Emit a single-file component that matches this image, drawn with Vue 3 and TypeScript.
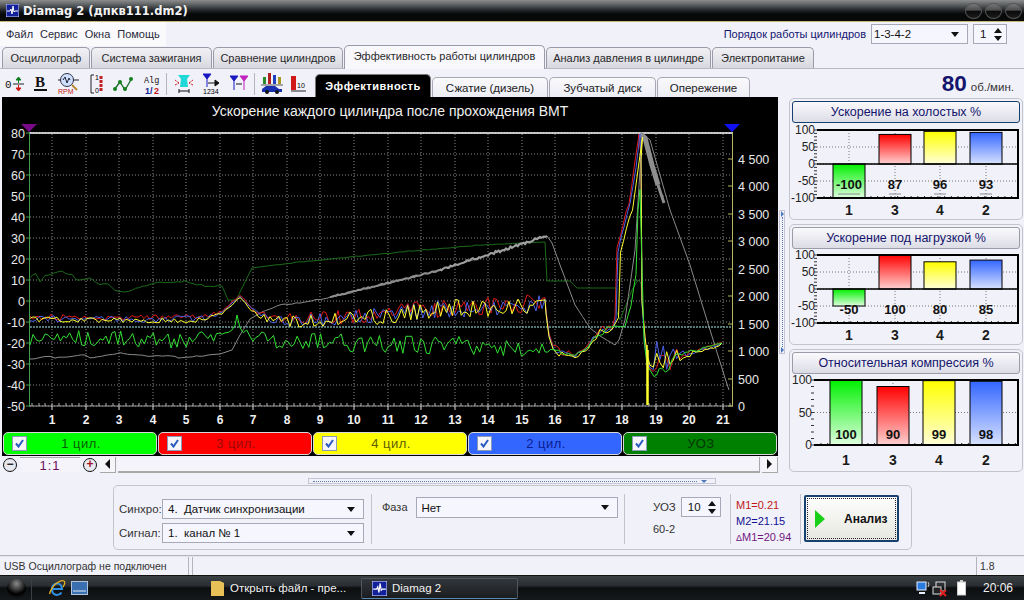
<template>
  <div class="app">
    <header class="titlebar">
      <svg class="app-icon" width="13" height="13" viewBox="0 0 13 13">
        <rect width="13" height="13" fill="#12209a" stroke="#cdd6ff" />
        <path d="M1 7h3l1-2 1 5 1-8 1 6 1-1h3" fill="none" stroke="#fff" />
      </svg>
      <span class="title-text">Diamag 2 (дпкв111.dm2)</span>
      <div class="win-buttons">
        <i v-for="n in 3" :key="n"></i>
      </div>
    </header>

    <div class="menurow">
      <nav class="menu">
        <span v-for="m in menu" :key="m">{{ m }}</span>
      </nav>
      <div class="order">
        <span class="order-label">Порядок работы цилиндров</span>
        <div class="combo order-combo"><span>1-3-4-2</span><b class="caret"></b></div>
        <div class="spin order-spin"><span>1</span><em><b class="up"></b><b class="down"></b></em></div>
      </div>
    </div>

    <div class="tabs">
      <div v-for="t in tabs" :key="t.name" class="tab" :class="{ active: t.active }" :style="{ width: t.w + 'px' }">{{ t.name }}</div>
    </div>

    <div class="toolbar">
      <div class="tools">
        <svg class="tool" width="20" height="24" viewBox="0 0 20 24">
          <text x="0" y="16" class="ic">0</text>
          <path d="M8 12h11" stroke="#222" />
          <path d="M13.500 11V7M11 8l2.500-3 2.500 3z" stroke="#0a7a1e" fill="#0a7a1e" />
          <path d="M13.500 13v4M11 16l2.500 3 2.500-3z" stroke="#d01818" fill="#d01818" />
        </svg>
        <svg class="tool" width="14" height="24" viewBox="0 0 14 24" style="margin-left:9px">
          <text x="1" y="15" class="ic-b">B</text>
          <rect x="0" y="17" width="13" height="2" fill="#111" />
        </svg>
        <svg class="tool" width="22" height="24" viewBox="0 0 22 24" style="margin-left:10px">
          <circle cx="9" cy="8" r="6.500" fill="#cfe0ff" stroke="#334" />
          <path d="M5 8l2-3 2 6 2-5 1 2" fill="none" stroke="#223" />
          <path d="M0 8h3M15 8h6" stroke="#223" />
          <path d="M14 13l5 5" stroke="#b98a30" stroke-width="2" />
          <text x="0" y="22" class="ic-s" fill="#c01818">RPM</text>
        </svg>
        <svg class="tool" width="15" height="24" viewBox="0 0 15 24" style="margin-left:10px">
          <path d="M4 3H1v18h3" fill="none" stroke="#222" />
          <text x="5" y="8" class="ic-s">1</text>
          <text x="5" y="21" class="ic-s">0</text>
          <path d="M11 4v15" stroke="#c02020" stroke-width="3" stroke-dasharray="3 1" />
        </svg>
        <svg class="tool" width="21" height="24" viewBox="0 0 21 24" style="margin-left:8px">
          <path d="M1 18l6-8 5 8 7-12" fill="none" stroke="#1a6a2a" stroke-width="1.300" />
          <circle cx="2" cy="17" r="2" fill="#148020" />
          <circle cx="7" cy="10" r="2" fill="#148020" />
          <circle cx="12" cy="17" r="2" fill="#148020" />
          <circle cx="18" cy="7" r="2" fill="#148020" />
        </svg>
        <svg class="tool" width="16" height="24" viewBox="0 0 16 24" style="margin-left:10px">
          <text x="0" y="11" class="ic-alg">Alg</text>
          <text x="1" y="22" class="ic-m" fill="#102090">1/</text>
          <text x="10" y="22" class="ic-m" fill="#c01818">2</text>
        </svg>
        <i class="sep"></i>
        <svg class="tool" width="18" height="24" viewBox="0 0 18 24" style="margin-left:8px">
          <path d="M3 3h12l-3 4 1 8H5l1-8z" fill="#20d8d8" />
          <path d="M0 8l4 3M18 8l-4 3M0 13l4-2M18 13l-4-2" stroke="#d02020" stroke-dasharray="2 1" />
          <path d="M4 19h10M4 17v4M14 17v4" stroke="#111" />
        </svg>
        <svg class="tool" width="17" height="24" viewBox="0 0 17 24" style="margin-left:10px">
          <path d="M0 2h8L4 7zM4 7v8" fill="#1818c0" stroke="#1818c0" />
          <path d="M5 11h10M12 8l4 3-4 3z" stroke="#111" fill="#111" />
          <text x="0" y="22" class="ic-s">1234</text>
        </svg>
        <svg class="tool" width="18" height="24" viewBox="0 0 18 24" style="margin-left:10px">
          <path d="M0 4h8L4 9zM4 9v9" fill="#1818c0" stroke="#1818c0" />
          <path d="M10 4h8l-4 5zM14 9v9" fill="#c020c0" stroke="#c020c0" />
          <path d="M6 12h6" stroke="#111" />
        </svg>
        <i class="sep sep-b"></i>
        <svg class="tool" width="22" height="24" viewBox="0 0 22 24" style="margin-left:6px">
          <rect x="2" y="5" width="3" height="7" fill="#2a8a2a" />
          <rect x="7" y="1" width="3" height="11" fill="#b02020" />
          <rect x="12" y="3" width="3" height="9" fill="#2040c0" />
          <rect x="17" y="5" width="3" height="7" fill="#a89a20" />
          <path d="M0 13h22" stroke="#555" />
          <path d="M1 20v-3l4-3h9l4 3h3v3z" fill="#1830b0" />
          <circle cx="6" cy="20" r="2" fill="#111" />
          <circle cx="16" cy="20" r="2" fill="#111" />
        </svg>
        <svg class="tool" width="15" height="24" viewBox="0 0 15 24" style="margin-left:8px">
          <rect x="0" y="4" width="5" height="14" fill="#d01818" />
          <text x="6" y="16" class="ic-s" font-weight="700">10</text>
          <path d="M0 19h15" stroke="#222" />
        </svg>
      </div>
      <div class="subtabs">
        <div v-for="s in subtabs" :key="s.name" class="subtab" :class="{ active: s.active }" :style="{ width: s.w + 'px' }">{{ s.name }}</div>
      </div>
      <div class="rpm"><strong>80</strong><span>об./мин.</span></div>
    </div>

    <main class="workspace">
      <section class="scope">
        <svg class="plot" width="776" height="334" viewBox="2 97 776 334">
          <rect x="2" y="97" width="776" height="334" fill="#000" />
          <text x="390" y="116" class="plot-title" text-anchor="middle">Ускорение каждого цилиндра после прохождения ВМТ</text>
          <g stroke="#8a8a8a" stroke-dasharray="1 2">
            <path v-for="t in xTicks" :key="'v' + t.n" :d="`M${t.x} 134V406`" />
            <path v-for="t in leftTicks" :key="'h' + t.v" :d="`M30 ${t.y}H733`" />
          </g>
          <path d="M30 327H733" stroke="#a8f0f0" stroke-dasharray="2 1" />
          <path d="M29 133H733" stroke="#fff" stroke-width="1.500" />
          <path d="M29.500 133V406" stroke="#3f9f4f" />
          <path d="M732.500 133V406" stroke="#b8b860" />
          <path d="M29 406H733" stroke="#9a9a9a" />
          <path v-for="x in minorX" :key="'m' + x" :d="`M${x} 406v-3`" stroke="#b0b0b0" />
          <path v-for="t in xTicks" :key="'t' + t.n" :d="`M${t.x} 406v4`" stroke="#ddd" />
          <path v-for="t in rightTicks" :key="'r' + t.v" :d="`M728 ${t.y}h5`" stroke="#b8b860" />
          <path v-for="t in leftTicks" :key="'l' + t.v" :d="`M26 ${t.y}h4`" stroke="#3f9f4f" />

          <polyline :points="series.uoz" class="line" stroke="#1b6a1b" />
          <polyline :points="series.gray" class="line" stroke="#8a8a8a" />
          <polyline :points="series.grayThin" class="line w2" stroke="#8e8e8e" />
          <polyline :points="series.grayThickA" class="line w2" stroke="#a0a0a0" />
          <polyline :points="series.grayThickB" class="line w5" stroke="#8e8e8e" />
          <polyline :points="series.grayThickC" class="line w3" stroke="#8e8e8e" />
          <polyline :points="series.red" class="line" stroke="#e01a1a" />
          <polyline :points="series.blue" class="line" stroke="#4a62e8" />
          <polyline :points="series.yellow" class="line" stroke="#ffff30" />
          <polyline :points="series.lime" class="line" stroke="#32e032" />
          <path d="M647 345V405M648 405V350" stroke="#ffff30" stroke-width="1.500" fill="none" />

          <path d="M21 124h16l-8 8z" fill="#7a0a8a" />
          <path d="M724 124h16l-8 8z" fill="#1010f0" />

          <text v-for="t in leftTicks" :key="'lt' + t.v" :x="25" :y="t.y + 4.500" class="axis-l" text-anchor="end">{{ t.v }}</text>
          <text v-for="t in rightTicks" :key="'rt' + t.v" :x="738" :y="t.y + 4.500" class="axis-r">{{ t.label }}</text>
          <text v-for="t in xTicks" :key="'xt' + t.n" :x="t.x" :y="424" class="axis-x" text-anchor="middle">{{ t.n }}</text>
        </svg>
        <div class="legend">
          <div v-for="c in legend" :key="c.name" class="leg" :style="{ background: c.bg, color: c.fg }">
            <span class="check">
              <svg width="9" height="9" viewBox="0 0 9 9"><path d="M1 4.500l2.500 3L8 1" fill="none" stroke="#2a5ac0" stroke-width="2" /></svg>
            </span>
            <span class="leg-name">{{ c.name }}</span>
          </div>
        </div>
        <div class="zoombar">
          <span class="round">&minus;</span>
          <span class="ratio">1:1</span>
          <span class="round plus">+</span>
          <span class="arrow"><b class="left"></b></span>
          <div class="track"></div>
          <span class="arrow"><b class="right"></b></span>
        </div>
      </section>

      <div class="vsplit">
        <b class="tip"></b>
        <i></i>
        <b class="tip"></b>
      </div>

      <aside class="side">
        <section v-for="p in panels" :key="p.title" class="panel" :style="{ height: p.h + 'px' }">
          <div class="panel-title" :class="{ focused: p.focused }">{{ p.title }}</div>
          <svg :width="232" :height="p.h - 27" :viewBox="`789 ${p.top + 25} 232 ${p.h - 27}`">
            <g stroke="#777" stroke-dasharray="1 2">
              <path v-for="g in p.grid" :key="'g' + g" :d="`M${p.left} ${g}H1016`" />
              <path v-for="b in p.bars" :key="'v' + b.label" :d="`M${b.x + b.w / 2} ${p.plotTop}V${p.plotBottom}`" />
            </g>
            <path v-for="g in p.minor" :key="'m' + g" :d="`M${p.left - 3} ${g}h3`" stroke="#333" />
            <path v-for="t in p.bottomTicks" :key="'b' + t" :d="`M${t} ${p.plotBottom - 2}v2`" stroke="#333" />
            <rect
              v-for="b in p.bars"
              :key="b.label"
              :x="b.x"
              :y="b.y"
              :width="b.w"
              :height="b.h"
              :fill="`url(#${b.grad})`"
              stroke="#000"
            />
            <path v-if="p.zero" :d="`M${p.left} ${p.zero}H1016`" stroke="#000" stroke-width="1.500" />
            <path :d="`M${p.left} ${p.plotTop}H1016V${p.plotBottom}H${p.left}`" fill="none" stroke="#000" stroke-width="2" />
            <template v-if="p.underline">
              <path v-for="b in p.bars" :key="'u' + b.label" :d="`M${b.x + b.w / 2 - (b.label === '1' ? 11 : 6)} ${p.plotBottom - 4}h${b.label === '1' ? 22 : 12}`" stroke="#8c8c8c" />
            </template>
            <text v-for="t in p.ticks" :key="'t' + t.v" :x="p.left - 2" :y="t.y + 4" class="bar-axis" text-anchor="end">{{ t.v }}</text>
            <text v-for="b in p.bars" :key="'val' + b.label" :x="b.x + b.w / 2" :y="p.valueY" class="bar-val" text-anchor="middle">{{ b.value }}</text>
            <text v-for="b in p.bars" :key="'lab' + b.label" :x="b.x + b.w / 2" :y="p.labelY" class="bar-label" text-anchor="middle">{{ b.label }}</text>
            <defs>
              <linearGradient id="g-green" x1="0" y1="0" x2="0" y2="1"><stop offset="0" stop-color="#00f000" /><stop offset="1" stop-color="#e0ffe0" /></linearGradient>
              <linearGradient id="g-red" x1="0" y1="0" x2="0" y2="1"><stop offset="0" stop-color="#ff0000" /><stop offset="1" stop-color="#ffd0d0" /></linearGradient>
              <linearGradient id="g-yellow" x1="0" y1="0" x2="0" y2="1"><stop offset="0" stop-color="#ffff00" /><stop offset="1" stop-color="#ffffd8" /></linearGradient>
              <linearGradient id="g-blue" x1="0" y1="0" x2="0" y2="1"><stop offset="0" stop-color="#3366ff" /><stop offset="1" stop-color="#d8e2ff" /></linearGradient>
            </defs>
          </svg>
        </section>
      </aside>
    </main>

    <div class="hsplit"><i></i><b class="tip-down"></b></div>

    <div class="controls-row">
      <section class="controls">
        <div class="ctl-group sync">
          <div class="ctl-line"><label>Синхро:</label><div class="combo"><span>4.&nbsp; Датчик синхронизации</span><b class="caret"></b></div></div>
          <div class="ctl-line"><label>Сигнал:</label><div class="combo"><span>1.&nbsp; канал № 1</span><b class="caret"></b></div></div>
        </div>
        <div class="ctl-group phase">
          <label>Фаза</label>
          <div class="combo"><span>Нет</span><b class="caret"></b></div>
        </div>
        <div class="ctl-group uoz">
          <div class="uoz-line"><label>УОЗ</label><div class="spin"><span>10</span><em><b class="up"></b><b class="down"></b></em></div></div>
          <div class="teeth">60-2</div>
        </div>
        <div class="ctl-group marks">
          <div class="m1">M1=0.21</div>
          <div class="m2">M2=21.15</div>
          <div class="m3"><small>&Delta;</small>M1=20.94</div>
        </div>
        <div class="analyze-wrap">
          <div class="analyze"><b class="play"></b><span>Анализ</span></div>
        </div>
      </section>
    </div>

    <footer class="status">
      <span class="st-main">USB Осциллограф не подключен</span>
      <span class="st-mid"></span>
      <span class="st-ver">1.8</span>
    </footer>

    <div class="taskbar">
      <div class="orb"><i></i></div>
      <svg class="ie" width="18" height="20" viewBox="0 0 18 20">
        <path d="M4.500 11h9.500c0-3.500-2.200-5.500-5-5.500S4 8 4 11.500 6.200 17 9 17c2 0 3.500-1 4.500-2.500" fill="none" stroke="#2f8ee0" stroke-width="2.200" />
        <path d="M1.500 16C4 7 12 1.500 16 3c1.500 1 .5 4-1 6" fill="none" stroke="#e8b020" stroke-width="1.300" />
      </svg>
      <svg class="desk" width="17" height="14" viewBox="0 0 17 14">
        <rect x="0.500" y="0.500" width="16" height="13" fill="#3a70b0" stroke="#b0c4dc" />
        <path d="M2 10h13" stroke="#dfe8f4" />
      </svg>
      <div class="task task-folder">
        <svg width="14" height="16" viewBox="0 0 14 16"><path d="M0 1h9l4 2v13H0z" fill="#e8c058" /></svg>
        <span>Открыть файл - пре...</span>
      </div>
      <div class="task task-active">
        <svg width="15" height="15" viewBox="0 0 13 13">
          <rect width="13" height="13" fill="#12209a" stroke="#cdd6ff" />
          <path d="M1 7h3l1-2 1 5 1-8 1 6 1-1h3" fill="none" stroke="#fff" />
        </svg>
        <span>Diamag 2</span>
      </div>
      <div class="tray">
        <svg width="34" height="17" viewBox="0 0 34 17">
          <rect x="1" y="2" width="9" height="8" fill="#2a7ae0" stroke="#e8f0ff" />
          <path d="M3 13h6" stroke="#e8f0ff" stroke-width="2" />
          <path d="M12 2q2 2 0 5" fill="none" stroke="#ccc" />
          <rect x="20" y="2" width="9" height="9" fill="none" stroke="#ddd" />
          <rect x="17" y="7" width="8" height="7" fill="#222" stroke="#ddd" />
          <path d="M24 10l6 6m0-6l-6 6" stroke="#e02020" stroke-width="2" />
        </svg>
        <svg width="9" height="16" viewBox="0 0 9 16" class="batt">
          <rect x="0.500" y="2" width="8" height="13" fill="#fff" stroke="#ccc" />
          <rect x="3" y="0" width="3" height="2" fill="#ccc" />
        </svg>
        <span class="clock">20:06</span>
      </div>
    </div>
  </div>
</template>

<script setup lang="ts">
type Pt = [number, number, number?]

const menu = ['Файл', 'Сервис', 'Окна', 'Помощь']

const tabs = [
  { name: 'Осциллограф', w: 88 },
  { name: 'Система зажигания', w: 121 },
  { name: 'Сравнение цилиндров', w: 130 },
  { name: 'Эффективность работы цилиндров', w: 201, active: true },
  { name: 'Анализ давления в цилиндре', w: 165 },
  { name: 'Электропитание', w: 102 }
]

const subtabs = [
  { name: 'Эффективность', w: 116, active: true },
  { name: 'Сжатие (дизель)', w: 116 },
  { name: 'Зубчатый диск', w: 107 },
  { name: 'Опережение', w: 93 }
]

const legend = [
  { name: '1 цил.', bg: '#00ff00', fg: '#056005' },
  { name: '3 цил.', bg: '#ff0000', fg: '#9a0a0a' },
  { name: '4 цил.', bg: '#ffff00', fg: '#5c5c00' },
  { name: '2 цил.', bg: '#3366ff', fg: '#0a2090' },
  { name: 'УОЗ', bg: '#008000', fg: '#033803' }
]

// chart scales, in page pixels
const xTicks = Array.from({ length: 21 }, (_, i) => ({ n: i + 1, x: Math.round(52 + i * 33.55) }))
const minorX = Array.from({ length: 105 }, (_, i) => Math.round(32 + i * 6.71))
const leftTicks = Array.from({ length: 14 }, (_, i) => ({ v: 80 - i * 10, y: 133 + i * 21 }))
const rightTicks = Array.from({ length: 10 }, (_, i) => {
  const v = (i + 1) * 500
  return { v, y: Math.round(406 - (v * 247) / 4500), label: v >= 1000 ? `${Math.floor(v / 1000)} ${String(v % 1000).padStart(3, '0')}` : String(v) }
}).concat([{ v: 0, y: 406, label: '0' }])
  .filter((t) => t.v <= 4500)

function rng(seed: number) {
  let s = seed * 7919 + 17
  return () => {
    s = (s * 16807) % 2147483647
    return s / 2147483647 - 0.5
  }
}

// interpolate between key points and add noise; shift moves the rising edge near 18 sideways
function trace(points: Pt[], seed: number, step = 3, dy = 0, shift = 0) {
  const rand = rng(seed)
  rand()
  rand()
  const out: string[] = []
  for (let i = 0; i < points.length - 1; i++) {
    const [x0, y0, a0 = 0] = points[i]
    const [x1, y1, a1 = 0] = points[i + 1]
    const n = Math.max(1, Math.round((x1 - x0) / step))
    for (let k = 0; k < n; k++) {
      const t = k / n
      const x = x0 + (x1 - x0) * t
      const y = y0 + (y1 - y0) * t + (a0 + (a1 - a0) * t) * rand() * 2 + dy
      const sx = x > 612 && x < 641 ? x + shift : x
      out.push(`${sx.toFixed(1)},${Math.min(405, y).toFixed(1)}`)
    }
  }
  const last = points[points.length - 1]
  out.push(`${last[0]},${last[1]}`)
  return out.join(' ')
}

const cylBase: Pt[] = [
  [30, 318, 3], [150, 319, 3], [205, 318, 3], [222, 312, 1], [232, 303, 0.8], [240, 296, 0.5], [248, 305, 1],
  [258, 314, 3], [270, 318, 4], [290, 320, 6], [320, 319, 7], [350, 317, 8], [380, 315, 8], [420, 311, 9],
  [470, 306, 10], [545, 304, 9], [546, 312, 3], [549, 335, 3], [553, 348, 4], [562, 353, 3], [575, 355, 2],
  [585, 350, 2.5], [590, 342, 3], [596, 335, 3], [600, 330, 3], [612, 328, 3], [616, 318, 2], [618, 250, 2],
  [624, 225, 3], [630, 205, 4], [636, 165, 4], [640, 135, 2], [641, 160, 2], [642, 300, 3], [645, 345, 10],
  [650, 360, 22], [660, 358, 18], [670, 360, 12], [680, 356, 7], [690, 353, 3], [705, 349, 1.5], [722, 343, 0.5]
]

const limeBase: Pt[] = [
  [30, 340, 8], [100, 338, 8], [180, 341, 8], [205, 338, 7], [225, 336, 4], [235, 325, 1], [237, 315, 0], [240, 325, 4],
  [250, 340, 8], [300, 340, 9], [350, 343, 9], [400, 345, 9], [450, 345, 9], [545, 350, 9], [553, 350, 4], [562, 353, 2],
  [575, 355, 1], [585, 350, 1], [595, 338, 2], [603, 332, 3], [612, 327, 3], [625, 325, 2], [631, 305, 1], [636, 275, 1],
  [638, 210, 1], [640, 190, 1], [641, 230, 1], [644, 340, 1], [647, 365, 5], [654, 375, 8], [662, 368, 8], [672, 360, 7],
  [682, 355, 3], [700, 349, 1], [722, 343, 0.5]
]

const uozBase: Pt[] = [
  [30, 277, 1], [36, 273, 1], [40, 282, 0], [45, 275, 1], [62, 272, 1], [72, 275, 1], [78, 280, 1], [90, 278, 1],
  [100, 284, 1], [108, 284, 0], [115, 291, 1], [125, 292, 0], [132, 290, 1], [150, 284, 1], [185, 281, 1], [205, 286, 1],
  [222, 286, 1], [228, 300, 0], [236, 300, 0], [252, 268, 0], [300, 262, 0.5], [400, 252, 0.5], [480, 245, 0.5], [545, 242, 0],
  [546, 262, 0], [547, 281, 0], [570, 281, 0], [577, 288, 0], [616, 288, 0], [616, 310, 0], [620, 320, 0], [632, 290, 0],
  [638, 280, 0], [641, 283, 0], [642, 300, 0]
]

const grayBase: Pt[] = [
  [30, 359, 0.5], [50, 356, 0.5], [55, 358, 0.5], [85, 355, 0.5], [90, 358, 0.5], [120, 353, 0.5], [150, 356, 0.5], [175, 356, 0.5],
  [178, 358, 0], [200, 356, 0.5], [220, 354, 0], [232, 350, 0], [240, 335, 0], [250, 319, 0], [262, 312, 0], [280, 305, 0.5],
  [300, 303, 0.5], [340, 295, 1], [400, 280, 1], [440, 270, 1], [547, 236, 0], [552, 243, 0], [560, 265, 0], [575, 305, 0],
  [590, 328, 0], [600, 336, 0], [615, 345, 0], [619, 340, 0], [625, 320, 0], [635, 250, 0], [640, 170, 0], [642, 133, 0],
  [650, 140, 0], [670, 210, 0], [690, 265, 0], [710, 330, 0], [725, 378, 0], [729, 390, 0]
]

const series = {
  uoz: trace(uozBase, 11, 4),
  gray: trace(grayBase, 23, 4),
  grayThin: trace([[330, 297, 0.6], [400, 280, 0.8], [440, 270, 0.8]], 37, 2),
  grayThickA: trace([[440, 270, 1.2], [500, 251, 1.6], [540, 238, 1.4], [547, 236, 0.5]], 41, 1.5),
  grayThickB: '640,134 645,138 652,165 658,185',
  grayThickC: '658,185 664,203',
  red: trace(cylBase, 101, 3, -1, -1),
  blue: trace(cylBase, 202, 3, 0.5, 0),
  yellow: trace(cylBase, 303, 3, 1.5, 2.5),
  lime: trace(limeBase, 404, 3)
}

interface Bar {
  label: string
  value: number
  grad: string
  x: number
  w: number
}

function makePanel(o: {
  title: string
  focused?: boolean
  top: number
  h: number
  left: number
  plotTop: number
  plotBottom: number
  min: number
  max: number
  ticks: number[]
  valueY: number
  labelY: number
  underline?: boolean
  bars: Bar[]
}) {
  const span = o.plotBottom - o.plotTop
  const toY = (v: number) => o.plotTop + ((o.max - v) * span) / (o.max - o.min)
  const zeroY = toY(0)
  const minorCount = (o.max - o.min) / 10
  return {
    ...o,
    grid: o.ticks.filter((t) => t !== o.max && t !== o.min).map(toY),
    zero: o.min < 0 ? zeroY : 0,
    ticks: o.ticks.map((v) => ({ v, y: toY(v) })),
    minor: Array.from({ length: minorCount + 1 }, (_, i) => o.plotTop + (i * span) / minorCount),
    bottomTicks: Array.from({ length: 30 }, (_, i) => o.left + 7 + i * 6.7),
    bars: o.bars.map((b) => {
      const y = toY(b.value)
      return { ...b, y: Math.min(y, zeroY), h: Math.abs(y - zeroY) }
    })
  }
}

const accelX = [831, 877, 922, 968]
const compX = [828, 875, 921, 968]
const names = ['1', '3', '4', '2']
const grads = ['g-green', 'g-red', 'g-yellow', 'g-blue']
const toBars = (values: number[], xs: number[]): Bar[] =>
  values.map((value, i) => ({ label: names[i], value, grad: grads[i], x: xs[i], w: 32 }))

const panels = [
  makePanel({
    title: 'Ускорение на холостых %',
    focused: true,
    top: 98,
    h: 122,
    left: 815,
    plotTop: 130,
    plotBottom: 198,
    min: -100,
    max: 100,
    ticks: [100, 50, 0, -50, -100],
    valueY: 189,
    labelY: 215,
    underline: true,
    bars: toBars([-100, 87, 96, 93], accelX)
  }),
  makePanel({
    title: 'Ускорение под нагрузкой %',
    top: 224,
    h: 121,
    left: 815,
    plotTop: 255,
    plotBottom: 323,
    min: -100,
    max: 100,
    ticks: [100, 50, 0, -50, -100],
    valueY: 314,
    labelY: 340,
    bars: toBars([-50, 100, 80, 85], accelX)
  }),
  makePanel({
    title: 'Относительная компрессия %',
    top: 349,
    h: 123,
    left: 812,
    plotTop: 380,
    plotBottom: 445,
    min: 0,
    max: 100,
    ticks: [100, 50, 0],
    valueY: 439,
    labelY: 465,
    bars: toBars([100, 90, 99, 98], compX)
  })
]
</script>

<style>
html,
body {
  margin: 0;
  background: #f1f1f9;
}
</style>

<style scoped>
.app {
  width: 1024px;
  height: 600px;
  overflow: hidden;
  display: flex;
  flex-direction: column;
  background: #f1f1f9;
  font-family: "Liberation Sans", Arial, sans-serif;
  font-size: 11.500px;
  color: #222;
}

.titlebar {
  height: 22px;
  flex: none;
  box-sizing: border-box;
  display: flex;
  align-items: center;
  padding: 0 2px 0 6px;
  background: linear-gradient(#8c8c8c 0, #5a5e60 5px, #24282a 10px, #060809 14px, #0a0a0a 20px);
  border-bottom: 1px solid #c8b878;
}
.title-text {
  margin-left: 4px;
  font-family: "DejaVu Sans", sans-serif;
  font-weight: 700;
  font-size: 11.500px;
  color: #f2f2f2;
}
.win-buttons {
  margin-left: auto;
  display: flex;
  gap: 3px;
}
.win-buttons i {
  box-sizing: border-box;
  width: 17px;
  height: 16px;
  border-radius: 50%;
  border: 1px solid #555;
  background: linear-gradient(#77797a 0, #4a4c4d 45%, #0a0a0a 50%, #1c1c1c 100%);
}

.menurow {
  height: 24px;
  flex: none;
  display: flex;
  justify-content: space-between;
}
.menu {
  width: 160px;
  padding-left: 6px;
  display: flex;
  align-items: center;
  gap: 7px;
  background: #fafafd;
  font-size: 11px;
  color: #2a2a3a;
}
.order {
  display: flex;
  align-items: center;
  padding-right: 17px;
}
.order-label {
  color: #141470;
  margin-right: 5px;
  font-size: 11px;
}
.order-combo {
  width: 97px;
  height: 20px;
}
.order-spin {
  width: 34px;
  height: 20px;
  margin-left: 5px;
}

.combo,
.spin {
  box-sizing: border-box;
  display: flex;
  align-items: center;
  justify-content: space-between;
  border: 1px solid #a8a8b8;
  background: #f6f6fe;
  padding: 0 8px 0 2px;
  color: #111;
}
.caret {
  width: 0;
  height: 0;
  border-left: 4px solid transparent;
  border-right: 4px solid transparent;
  border-top: 5px solid #111;
}
.spin {
  padding: 0 4px 0 6px;
}
.spin em {
  display: flex;
  flex-direction: column;
  gap: 3px;
}
.up,
.down {
  display: block;
  width: 0;
  height: 0;
  border-left: 4px solid transparent;
  border-right: 4px solid transparent;
}
.up {
  border-bottom: 5px solid #111;
}
.down {
  border-top: 5px solid #111;
}

.tabs {
  height: 23px;
  flex: none;
  box-sizing: border-box;
  padding: 0 0 0 2px;
  display: flex;
  align-items: flex-end;
  border-bottom: 1px solid #b8b8c4;
}
.tab {
  box-sizing: border-box;
  height: 21px;
  margin-right: 1px;
  border: 1px solid #9a9aa8;
  border-bottom: none;
  border-radius: 5px 5px 0 0;
  background: linear-gradient(#f1f1f5, #d8d8e0);
  text-align: center;
  line-height: 20px;
  font-size: 11px;
  white-space: nowrap;
  color: #2a2a2a;
}
.tab.active {
  height: 24px;
  margin-bottom: -1px;
  background: #f7f7fc;
  line-height: 21px;
  position: relative;
  z-index: 1;
}

.toolbar {
  height: 28px;
  flex: none;
  box-sizing: border-box;
  display: flex;
  align-items: flex-end;
  padding-left: 5px;
}
.tools {
  width: 310px;
  height: 27px;
  flex: none;
  display: flex;
  align-items: center;
}
.tool {
  flex: none;
}
.sep {
  width: 1px;
  height: 22px;
  margin-left: 6px;
  background: #b4b4c0;
}
.sep-b {
  margin-left: 6px;
}
.ic {
  font: 11px "Liberation Mono", monospace;
  fill: #111;
}
.ic-alg {
  font: 8.500px "Liberation Mono", monospace;
  fill: #111;
}
.ic-b {
  font: 700 15px "Liberation Serif", serif;
  fill: #111;
}
.ic-s {
  font: 7px "Liberation Sans", sans-serif;
}
.ic-m {
  font: 700 9px "Liberation Sans", sans-serif;
}
.subtabs {
  display: flex;
  align-items: flex-end;
}
.subtab {
  box-sizing: border-box;
  height: 20px;
  margin-right: 1px;
  border: 1px solid #a8a8b4;
  border-bottom: none;
  border-radius: 5px 5px 0 0;
  background: linear-gradient(#fafafd, #ececf4);
  text-align: center;
  line-height: 21px;
  font-size: 11.500px;
  color: #222;
}
.subtab.active {
  height: 23px;
  background: #000;
  border-color: #777;
  color: #fff;
  font-weight: 700;
  font-size: 11px;
  letter-spacing: 0.5px;
  line-height: 22px;
}
.rpm {
  margin-left: auto;
  padding-right: 10px;
  display: flex;
  align-items: baseline;
  gap: 4px;
  color: #333;
  font-size: 11.500px;
}
.rpm strong {
  font-size: 22.500px;
  line-height: 26px;
  color: #14146c;
}

.workspace {
  height: 378px;
  flex: none;
  display: flex;
  padding-left: 2px;
}
.scope {
  width: 776px;
  flex: none;
}
.plot {
  display: block;
}
.line {
  fill: none;
  stroke-width: 1;
  stroke-linejoin: round;
}
.w2 {
  stroke-width: 2;
}
.w3 {
  stroke-width: 3;
}
.w5 {
  stroke-width: 5;
}
.plot-title {
  font-size: 14px;
  fill: #f0f0f0;
}
.axis-l,
.axis-r {
  font-size: 12.500px;
  fill: #e8e8e8;
}
.axis-x {
  font-size: 12px;
  font-weight: 700;
  fill: #f0f0f0;
}

.legend {
  height: 25px;
  box-sizing: border-box;
  padding: 1px;
  display: flex;
  gap: 1px;
  background: #000;
}
.leg {
  flex: 1;
  display: flex;
  align-items: center;
  padding-left: 8px;
  border-radius: 5px;
  border: 1px solid #d8d8d8;
  font-size: 13px;
  letter-spacing: 0.5px;
}
.check {
  width: 13px;
  height: 13px;
  flex: none;
  display: flex;
  align-items: center;
  justify-content: center;
  background: #f6f6fa;
  border: 1px solid #8a9ab8;
}
.leg-name {
  flex: 1;
  text-align: center;
  margin-right: 21px;
}

.zoombar {
  height: 17px;
  display: flex;
  align-items: center;
  gap: 2px;
}
.round {
  box-sizing: border-box;
  width: 14px;
  height: 14px;
  margin: 0 1px;
  flex: none;
  border-radius: 50%;
  border: 1.500px solid #111;
  text-align: center;
  line-height: 10px;
  font-size: 12px;
  font-weight: 700;
  background: #e8e8f0;
}
.round.plus {
  color: #a01020;
}
.ratio {
  width: 60px;
  height: 15px;
  box-sizing: border-box;
  text-align: center;
  line-height: 16px;
  color: #701060;
  font-size: 13px;
  letter-spacing: 1px;
  border-top: 1px solid #aaa;
  background: #f4f4fa;
}
.arrow {
  width: 16px;
  height: 16px;
  flex: none;
  box-sizing: border-box;
  display: flex;
  align-items: center;
  justify-content: center;
  background: #f6f6fa;
  border-right: 1px solid #a8a8a8;
  border-bottom: 1px solid #a8a8a8;
}
.left,
.right {
  width: 0;
  height: 0;
  border-top: 5px solid transparent;
  border-bottom: 5px solid transparent;
}
.left {
  border-right: 5px solid #111;
}
.right {
  border-left: 5px solid #111;
}
.track {
  flex: 1;
  height: 16px;
  box-sizing: border-box;
  background: #f4f4fa;
  border-bottom: 2px solid #a8a8a8;
  border-right: 1px solid #a8a8a8;
}

.vsplit {
  width: 6px;
  flex: none;
  margin: 113px 4px 121px 1px;
  display: flex;
  flex-direction: column;
  align-items: center;
  border: 1px solid #c4c4d4;
  box-sizing: border-box;
}
.vsplit i {
  flex: 1;
  width: 0;
  border-left: 1px dotted #5a78b0;
}
.tip {
  width: 0;
  height: 0;
  border-top: 3px solid transparent;
  border-bottom: 3px solid transparent;
  border-left: 3px solid #4a78b8;
}

.side {
  width: 234px;
  flex: none;
  padding-top: 1px;
  display: flex;
  flex-direction: column;
  gap: 4px;
}
.panel {
  box-sizing: border-box;
  padding: 2px 1px 0;
  border: 1px solid #c4c4cc;
  border-radius: 5px;
}
.panel svg {
  display: block;
}
.panel-title {
  box-sizing: border-box;
  height: 22px;
  margin: 0 1px;
  border: 1px solid #9c9ca8;
  border-radius: 3px;
  background: linear-gradient(#fafafd, #dcdce6);
  text-align: center;
  line-height: 21px;
  font-size: 12.500px;
  color: #14146c;
}
.panel-title.focused {
  border-color: #16406e;
}
.bar-axis {
  font-size: 12px;
  fill: #222;
}
.bar-val {
  font-size: 13px;
  font-weight: 700;
  fill: #111;
}
.bar-label {
  font-size: 14px;
  font-weight: 700;
  fill: #1a1a1a;
}

.hsplit {
  height: 6px;
  flex: none;
  box-sizing: border-box;
  width: 408px;
  margin: 3px 0 0 308px;
  border: 1px solid #c4c4d4;
  display: flex;
  align-items: center;
  gap: 4px;
  padding: 0 4px;
}
.hsplit i {
  flex: 1;
  border-top: 1px dotted #5a78b0;
}
.tip-down {
  order: 1;
  width: 0;
  height: 0;
  margin-right: 4px;
  border-left: 3px solid transparent;
  border-right: 3px solid transparent;
  border-top: 3px solid #4a78b8;
}

.controls-row {
  flex: none;
  height: 72px;
  box-sizing: border-box;
  padding: 1px 0 0 113px;
  border-bottom: 1px solid #b4b4bc;
}
.controls {
  box-sizing: border-box;
  width: 799px;
  height: 65px;
  border: 1px solid #c4c4cc;
  border-radius: 5px;
  display: flex;
  align-items: stretch;
  padding: 8px 0 5px;
}
.ctl-group {
  box-sizing: border-box;
  border-right: 1px solid #c4c4cc;
}
.sync {
  width: 258px;
  padding: 5px 6px 0 5px;
  display: flex;
  flex-direction: column;
  gap: 4px;
}
.ctl-line {
  display: flex;
  align-items: center;
}
.ctl-line label {
  width: 43px;
  color: #333;
}
.sync .combo {
  width: 202px;
  height: 20px;
  padding-left: 5px;
}
.phase {
  width: 253px;
  padding: 3px 5px 0 10px;
  display: flex;
  align-items: flex-start;
  gap: 8px;
}
.phase label {
  margin-top: 4px;
  font-size: 11px;
  color: #333;
}
.phase .combo {
  width: 202px;
  height: 21px;
  padding-left: 5px;
}
.uoz {
  width: 106px;
  padding: 3px 0 0 28px;
}
.uoz-line {
  display: flex;
  align-items: center;
  gap: 5px;
}
.uoz-line label {
  color: #333;
}
.uoz-line .spin {
  width: 40px;
  height: 20px;
}
.teeth {
  margin-top: 6px;
  color: #333;
  font-size: 11px;
}
.marks {
  width: 70px;
  padding: 3px 0 0 5px;
  font-size: 11px;
  line-height: 16px;
}
.m1 {
  color: #c01818;
}
.m2 {
  color: #101090;
}
.m3 {
  color: #701880;
  white-space: nowrap;
}
.m3 small {
  font-size: 9px;
}
.analyze-wrap {
  padding: 1px 0 0 3px;
}
.analyze {
  box-sizing: border-box;
  width: 95px;
  height: 47px;
  display: flex;
  align-items: center;
  border: 2px solid #16406e;
  outline: 1px dotted #223;
  outline-offset: -4px;
  border-radius: 2px;
  background: linear-gradient(#fdfdfd, #e8e8e0);
  font-weight: 700;
  font-size: 12px;
  color: #111;
}
.play {
  margin-left: 9px;
  width: 0;
  height: 0;
  border-top: 9px solid transparent;
  border-bottom: 9px solid transparent;
  border-left: 10px solid #18d018;
}
.analyze span {
  margin-left: 19px;
}

.status {
  flex: none;
  height: 19px;
  display: flex;
  box-sizing: border-box;
  border-top: 1px solid #e4e4ec;
  font-size: 10.500px;
  color: #333;
}
.st-main {
  width: 189px;
  padding-left: 4px;
  box-sizing: border-box;
  line-height: 18px;
  border-right: 1px solid #b4b4bc;
}
.st-mid {
  flex: 1;
  margin-left: 3px;
  border-left: 1px solid #b4b4bc;
}
.st-ver {
  width: 48px;
  box-sizing: border-box;
  padding-left: 3px;
  line-height: 18px;
  border-left: 1px solid #b4b4bc;
}

.taskbar {
  flex: 1;
  display: flex;
  align-items: center;
  background: linear-gradient(#3a4044 0, #2a2e32 40%, #0c0e10 50%, #16191c 100%);
  color: #f0f0f0;
  border-top: 1px solid #111;
}
.orb {
  width: 32px;
  height: 100%;
  display: flex;
  align-items: center;
  justify-content: center;
  margin-right: 14px;
  border-right: 1px solid #3c4044;
  box-sizing: border-box;
  padding-left: 2px;
}
.orb i {
  width: 19px;
  height: 19px;
  border-radius: 50%;
  background: radial-gradient(circle at 50% 25%, #8a8a8a 0, #3a3a3a 35%, #000 60%, #222 100%);
}
.ie {
  margin: 0 5px 0 2px;
}
.task {
  display: flex;
  align-items: center;
  gap: 5px;
  font-size: 11.500px;
}
.task-folder {
  margin-left: 123px;
  width: 150px;
}
.task-active {
  width: 157px;
  height: 21px;
  box-sizing: border-box;
  padding-left: 10px;
  border: 1px solid #50565c;
  border-bottom-color: #5a8ab4;
  border-radius: 2px;
  background: linear-gradient(#32363a, #1a1d20);
}
.tray {
  margin-left: auto;
  padding-right: 11px;
  display: flex;
  align-items: center;
}
.batt {
  margin-left: 7px;
}
.clock {
  margin-left: 17px;
  font-size: 12px;
}
</style>
